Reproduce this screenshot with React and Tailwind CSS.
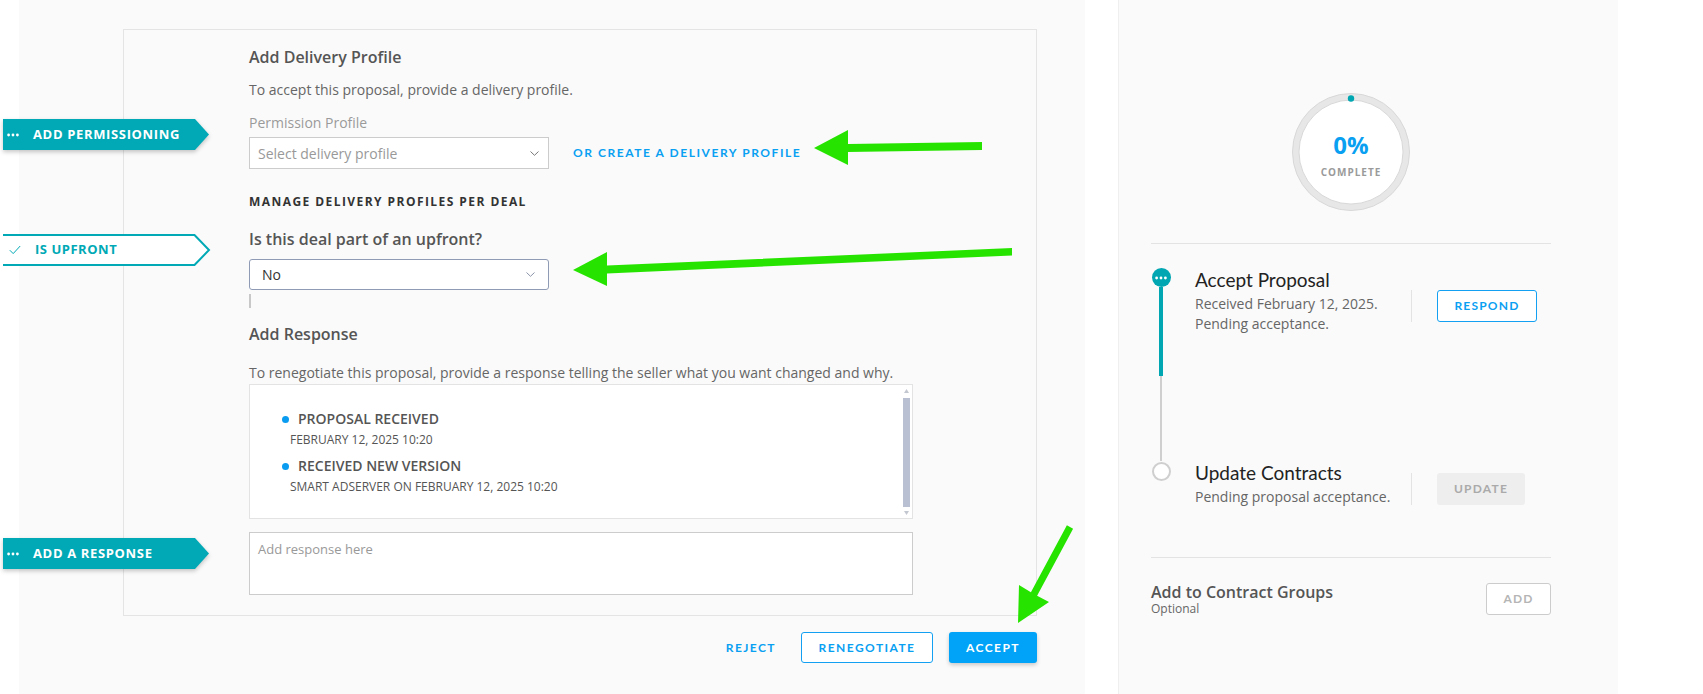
import React from 'react'

const Dots = ({ color = '#fff' }) => (
  <svg width="12" height="4" viewBox="0 0 12 4">
    <circle cx="1.6" cy="2" r="1.4" fill={color} />
    <circle cx="6" cy="2" r="1.4" fill={color} />
    <circle cx="10.4" cy="2" r="1.4" fill={color} />
  </svg>
)

const Chevron = ({ color }) => (
  <svg width="9" height="5" viewBox="0 0 9 5">
    <polyline points="0.5,0.5 4.5,4.3 8.5,0.5" fill="none" stroke={color} strokeWidth="1" />
  </svg>
)

function Tag({ className, outline, children }) {
  return (
    <div className={`absolute left-[3px] h-[32px] w-[208px] ${className}`}>
      {outline ? (
        <svg className="absolute inset-0" width="208" height="32" viewBox="0 0 208 32">
          <path d="M0 1 H191.5 L206 16 L191.5 31 H0" fill="#fff" stroke="#00a9b5" strokeWidth="2" />
        </svg>
      ) : (
        <svg className="absolute inset-0 drop-shadow-[0_2px_2px_rgba(0,0,0,0.22)]" width="208" height="32" viewBox="0 0 208 32">
          <path d="M0 0 H192 L206 15.5 L192 31 H0 Z" fill="#00a9b5" />
        </svg>
      )}
      <div className="relative flex h-[31px] items-center pl-[4px]">{children}</div>
    </div>
  )
}

function Step({ first, title, lines, action, disabled }) {
  return (
    <div className="flex">
      <div className="flex w-[20px] flex-col items-center">
        {first ? (
          <>
            <div className="flex h-[19px] w-[19px] items-center justify-center rounded-full bg-[#00a6b1]">
              <Dots />
            </div>
            <div className="h-[89px] w-[4px] bg-[#00a6b1]" />
            <div className="h-[85px] w-[2px] bg-[#cfcfcf]" />
          </>
        ) : (
          <div className="mt-px h-[19px] w-[19px] rounded-full border-2 border-[#cfcfcf] bg-white" />
        )}
      </div>
      <div className="ml-[24px] w-[216px]">
        <div className="font-['Lato',sans-serif] text-[19px] leading-6 text-[#222]">{title}</div>
        <div className="mt-[2px] text-[14px] leading-5 text-[#666]">
          {lines.map((l) => (
            <div key={l}>{l}</div>
          ))}
        </div>
      </div>
      <div className={`flex items-start ${first ? 'mt-[22px]' : 'mt-[12px]'}`}>
        <div className="h-[32px] w-px bg-[#e3e3e3]" />
        {disabled ? (
          <button className="ml-[25px] h-[32px] w-[88px] rounded-[3px] bg-[#eeeeee] font-['Lato',sans-serif] text-[12px] font-bold tracking-[0.1em] text-[#aaa]">
            {action}
          </button>
        ) : (
          <button className="ml-[25px] h-[32px] w-[100px] rounded-[3px] border border-[#13a0f2] bg-white font-['Lato',sans-serif] text-[12px] font-bold tracking-[0.1em] text-[#0aa0f2]">
            {action}
          </button>
        )}
      </div>
    </div>
  )
}

export default function App() {
  return (
    <div className="relative flex h-[694px] w-full overflow-hidden bg-white font-['Open_Sans',sans-serif]">
      <div className="w-[19px] shrink-0" />

      {/* main column */}
      <div className="w-[1066px] shrink-0 bg-[#fafafa] pl-[104px] pt-[29px]">
        <div className="w-[914px] border border-[#e4e4e4] pb-[20px] pl-[125px] pt-[16px]">
          <div className="text-[16px] font-semibold leading-[22px] text-[#555]">Add Delivery Profile</div>
          <div className="mt-[12px] text-[14px] leading-5 text-[#666]">To accept this proposal, provide a delivery profile.</div>
          <div className="mt-[13px] text-[14px] leading-5 text-[#9a9a9a]">Permission Profile</div>
          <div className="mt-[4px] flex items-center">
            <div className="flex h-[32px] w-[300px] items-center justify-between border border-[#cccccc] bg-white pl-[8px] pr-[9px]">
              <span className="text-[14px] text-[#999]">Select delivery profile</span>
              <Chevron color="#777" />
            </div>
            <a className="ml-[24px] font-['Lato',sans-serif] text-[12px] font-bold tracking-[0.13em] text-[#0aa0f2]">
              OR CREATE A DELIVERY PROFILE
            </a>
          </div>
          <div className="mt-[25px] text-[12px] font-bold leading-4 tracking-[0.12em] text-[#333]">
            MANAGE DELIVERY PROFILES PER DEAL
          </div>
          <div className="mt-[18px] text-[16px] font-semibold leading-[22px] text-[#555]">Is this deal part of an upfront?</div>
          <div className="mt-[9px] flex h-[31px] w-[300px] items-center justify-between rounded-[3px] border border-[#8f9bb5] bg-white pl-[12px] pr-[13px]">
            <span className="text-[14px] text-[#333]">No</span>
            <Chevron color="#8a93a8" />
          </div>
          <div className="mt-[4px] h-[14px] w-[2px] bg-[#c8c8c8]" />
          <div className="mt-[15px] text-[16px] font-semibold leading-[22px] text-[#555]">Add Response</div>
          <div className="mt-[18px] text-[14px] leading-5 text-[#666]">
            To renegotiate this proposal, provide a response telling the seller what you want changed and why.
          </div>
          <div className="mt-px flex h-[135px] w-[664px] border border-[#e3e3e3] bg-white">
            <div className="flex-1 pl-[32px] pt-[24px] text-[#555]">
              <div className="flex items-center gap-[9px] text-[14px] font-semibold leading-5">
                <span className="h-[7px] w-[7px] rounded-full bg-[#0a9cf0]" />
                PROPOSAL RECEIVED
              </div>
              <div className="mt-px pl-[8px] text-[12px] leading-5">FEBRUARY 12, 2025 10:20</div>
              <div className="mt-[6px] flex items-center gap-[9px] text-[14px] font-semibold leading-5">
                <span className="h-[7px] w-[7px] rounded-full bg-[#0a9cf0]" />
                RECEIVED NEW VERSION
              </div>
              <div className="mt-px pl-[8px] text-[12px] leading-5">SMART ADSERVER ON FEBRUARY 12, 2025 10:20</div>
            </div>
            <div className="mr-[2px] flex w-[7px] flex-col items-center pt-[4px]">
              <svg width="5" height="4" viewBox="0 0 5 4">
                <polygon points="2.5,0 5,4 0,4" fill="#c3c7d0" />
              </svg>
              <div className="mt-[5px] h-[109px] w-[7px] bg-[#b9c0d2]" />
              <svg className="mt-[4px]" width="5" height="4" viewBox="0 0 5 4">
                <polygon points="0,0 5,0 2.5,4" fill="#c3c7d0" />
              </svg>
            </div>
          </div>
          <div className="mt-[13px] h-[63px] w-[664px] border border-[#cccccc] bg-white pl-[8px] pt-[7px] text-[13px] text-[#999]">
            Add response here
          </div>
        </div>

        <div className="mt-[16px] flex w-[914px] justify-end gap-4">
          <button className="h-[31px] px-[9px] font-['Lato',sans-serif] text-[12px] font-bold tracking-[0.12em] text-[#0aa0f2]">REJECT</button>
          <button className="h-[31px] w-[132px] rounded-[3px] border border-[#13a0f2] bg-white font-['Lato',sans-serif] text-[12px] font-bold tracking-[0.12em] text-[#0aa0f2]">
            RENEGOTIATE
          </button>
          <button className="h-[31px] w-[88px] rounded-[3px] bg-[#00a3f7] font-['Lato',sans-serif] text-[12px] font-bold tracking-[0.12em] text-white shadow-[0_2px_4px_rgba(0,0,0,0.2)]">
            ACCEPT
          </button>
        </div>
      </div>

      <div className="w-[33px] shrink-0" />

      {/* right column */}
      <div className="w-[500px] shrink-0 border-l border-[#efefef] bg-[#fafafa] pl-[32px] pr-[67px] pt-[93px]">
        <div className="relative mx-auto h-[118px] w-[118px]">
          <svg className="absolute inset-0" width="118" height="118" viewBox="0 0 118 118">
            <circle cx="59" cy="59" r="58.5" fill="#e7e7e7" stroke="#d8d8d8" strokeWidth="1" />
            <circle cx="59" cy="59" r="52" fill="#fff" stroke="#d8d8d8" strokeWidth="1" />
            <circle cx="59" cy="5.5" r="3.2" fill="#00a6b1" />
          </svg>
          <div className="relative flex flex-col items-center pt-[37px]">
            <div className="text-[24px] font-bold leading-[30px] text-[#0aa0f2]">0%</div>
            <div className="mt-[5px] text-[10px] font-bold leading-[14px] tracking-[0.1em] text-[#9a9a9a]">COMPLETE</div>
          </div>
        </div>
        <div className="mt-[32px] h-px bg-[#e3e3e3]" />
        <div className="mt-[24px]">
          <Step first title="Accept Proposal" lines={['Received February 12, 2025.', 'Pending acceptance.']} action="RESPOND" />
          <Step title="Update Contracts" lines={['Pending proposal acceptance.']} action="UPDATE" disabled />
        </div>
        <div className="mt-[50px] h-px bg-[#e3e3e3]" />
        <div className="mt-[24px] flex items-start justify-between">
          <div>
            <div className="text-[16px] font-semibold leading-5 text-[#555]">Add to Contract Groups</div>
            <div className="text-[12px] leading-[14px] text-[#666]">Optional</div>
          </div>
          <button className="mt-px h-[32px] w-[65px] rounded-[3px] border border-[#cccccc] bg-white font-['Lato',sans-serif] text-[12px] font-bold tracking-[0.1em] text-[#b5b5b5]">
            ADD
          </button>
        </div>
      </div>

      <div className="flex-1" />

      {/* annotation tags */}
      <Tag className="top-[119px]">
        <Dots />
        <span className="ml-[14px] text-[13px] font-bold tracking-[0.05em] text-white">ADD PERMISSIONING</span>
      </Tag>
      <Tag className="top-[234px]" outline>
        <svg className="ml-[2px]" width="12" height="10" viewBox="0 0 12 10">
          <polyline points="0.8,5.2 4.2,8.6 11.2,1" fill="none" stroke="#00a9b5" strokeWidth="1" />
        </svg>
        <span className="ml-[14px] text-[13px] font-bold tracking-[0.04em] text-[#00a9b5]">IS UPFRONT</span>
      </Tag>
      <Tag className="top-[538px]">
        <Dots />
        <span className="ml-[14px] text-[13px] font-bold tracking-[0.05em] text-white">ADD A RESPONSE</span>
      </Tag>

      {/* green annotation arrows */}
      <svg className="pointer-events-none absolute left-0 top-0" width="1703" height="694" viewBox="0 0 1703 694">
        <polygon points="814,148 848,130 848,144 982,142 982,150 848,152 848,165" fill="#27e400" />
        <polygon points="573,270 607,252 607,265.5 1012,248 1012,255.5 607,273.5 607,286" fill="#27e400" />
        <polygon points="1066.9,525.3 1030.9,592.3 1019,585 1018,623 1049,602 1037.1,595.7 1073.1,528.7" fill="#27e400" />
      </svg>
    </div>
  )
}
